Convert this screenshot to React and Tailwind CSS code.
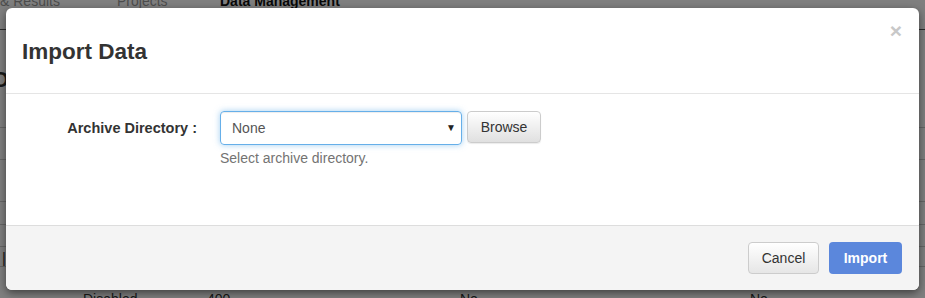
import React from "react";

export default function App() {
  const font = { fontFamily: '"Liberation Sans", Arial, sans-serif' };
  return (
    <div className="relative w-[925px] h-[298px] overflow-hidden bg-white text-[#333]" style={font}>
      {/* background page */}
      <div className="flex flex-col">
        <div className="flex h-[39px] items-start text-[14px] -mt-[9px] border-b border-[#555]">
          <span className="ml-[-56px] w-[173px] text-[#999]">Analysis &amp; Results</span>
          <span className="w-[103px] text-[#999]">Projects</span>
          <span className="font-bold text-[#111]">Data Management</span>
        </div>
        <div className="h-[98px] pt-[39px] text-[22px] font-bold leading-none -ml-[8px] border-b border-[#ccc]">Op</div>
        <div className="h-[32px] border-b border-[#ccc]"></div>
        <div className="h-[42px] border-b border-[#ccc]"></div>
        <div className="h-[23px] border-b border-[#ccc]"></div>
        <div className="h-[22px] border-b border-[#ccc]"></div>
        <div className="h-[20px] border-b border-[#ccc] pl-[2px] text-[15px] leading-[22px]">|</div>
        <div className="flex text-[14px] leading-[16px] pt-[24px]">
          <span className="ml-[83px] w-[124px]">Disabled</span>
          <span className="w-[253px]">400</span>
          <span className="w-[290px]">No</span>
          <span>No</span>
        </div>
      </div>
      {/* overlay */}
      <div className="absolute inset-0 bg-black/50"></div>
      {/* modal */}
      <div className="absolute left-[6px] top-[8px] w-[913px] h-[282px] bg-white rounded-[6px] shadow-[0_3px_9px_rgba(0,0,0,0.5)] flex flex-col overflow-hidden">
        <div className="relative h-[86px] shrink-0 border-b border-[#e5e5e5] flex items-center pl-[16px]">
          <h4 className="text-[22.5px] font-bold text-[#333] leading-none mt-[3px]">Import Data</h4>
          <span className="absolute right-[17px] top-[12px] text-[21px] font-bold text-[#c8c8c8] leading-none">×</span>
        </div>
        <div className="h-[131px] shrink-0 pt-[17px]">
          <div className="flex items-start">
            <label className="w-[191px] text-right text-[14.5px] font-bold text-[#333] leading-[34px]">Archive Directory :</label>
            <div className="ml-[23px] flex flex-col">
              <div className="flex items-start">
                <div className="relative w-[242px] h-[34px] rounded-[4px] border border-[#66afe9] shadow-[inset_0_1px_1px_rgba(0,0,0,0.075),0_0_6px_rgba(102,175,233,0.6)] flex items-center pl-[11px] text-[14px] text-[#555]">
                  None
                  <span className="absolute right-[5px] top-[8px] text-[10px] text-[#222]">▼</span>
                </div>
                <button className="ml-[5px] w-[74px] h-[32px] rounded-[4px] border border-[#ccc] bg-gradient-to-b from-white to-[#e0e0e0] text-[14px] text-[#333] shadow-[0_1px_1px_rgba(0,0,0,0.08)]">Browse</button>
              </div>
              <span className="mt-[4px] text-[14px] text-[#737373] leading-[18px]">Select archive directory.</span>
            </div>
          </div>
        </div>
        <div className="flex-1 bg-[#f4f4f4] border-t border-[#ddd] flex justify-end items-start pt-[16px] pr-[17px] gap-[10px]">
          <button className="w-[71px] h-[32px] rounded-[4px] border border-[#ccc] bg-gradient-to-b from-white to-[#e6e6e6] text-[14px] text-[#333]">Cancel</button>
          <button className="w-[73px] h-[32px] rounded-[4px] bg-[#5b87dc] text-[14px] font-bold text-white">Import</button>
        </div>
      </div>
    </div>
  );
}
